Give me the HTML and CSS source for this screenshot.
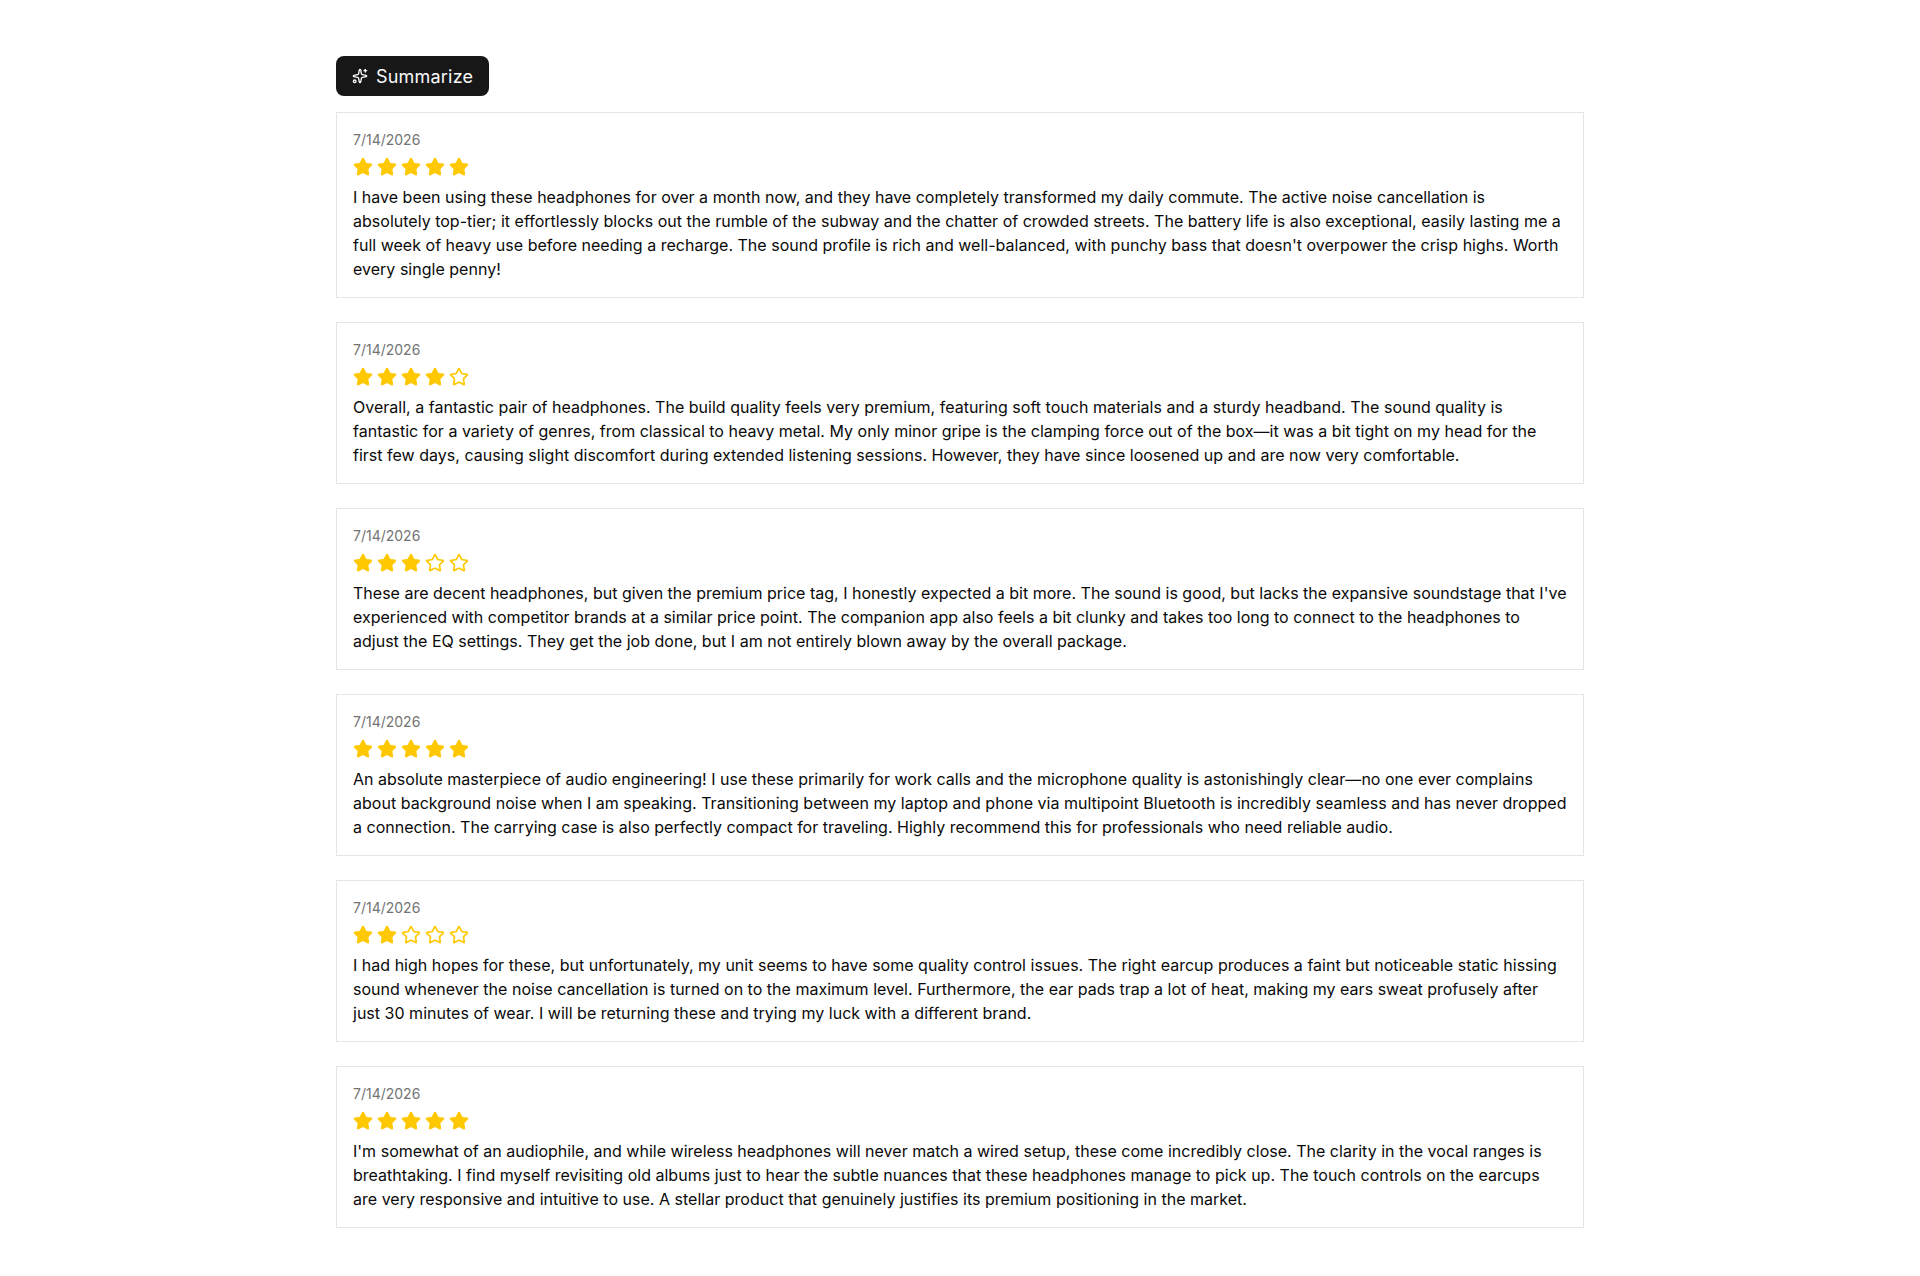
FILE: index.html
```html
<!DOCTYPE html>
<html lang="en">
<head>
<meta charset="utf-8">
<title>Reviews</title>
<link rel="stylesheet" href="styles.css">
</head>
<body>
<svg class="defs" width="0" height="0" aria-hidden="true">
  <symbol id="star" viewBox="0 0 24 24"><path d="M11.525 2.295a.53.53 0 0 1 .95 0l2.31 4.679a2.123 2.123 0 0 0 1.595 1.16l5.166.756a.53.53 0 0 1 .294.904l-3.736 3.638a2.123 2.123 0 0 0-.611 1.878l.882 5.14a.53.53 0 0 1-.771.56l-4.618-2.428a2.122 2.122 0 0 0-1.973 0L6.396 21.01a.53.53 0 0 1-.77-.56l.881-5.139a2.122 2.122 0 0 0-.611-1.879L2.16 9.795a.53.53 0 0 1 .294-.906l5.165-.755a2.122 2.122 0 0 0 1.597-1.16z"/></symbol>
</svg>
<main class="page">
  <button class="summarize" type="button">
    <svg class="spark" viewBox="0 0 24 24"><path d="M11.017 2.814a1 1 0 0 1 1.966 0l1.051 5.558a2 2 0 0 0 1.594 1.594l5.558 1.051a1 1 0 0 1 0 1.966l-5.558 1.051a2 2 0 0 0-1.594 1.594l-1.051 5.558a1 1 0 0 1-1.966 0l-1.051-5.558a2 2 0 0 0-1.594-1.594l-5.558-1.051a1 1 0 0 1 0-1.966l5.558-1.051a2 2 0 0 0 1.594-1.594z"/><path d="M20 2v4"/><path d="M22 4h-4"/><circle cx="4" cy="20" r="2"/></svg>
    <span class="label">Summarize</span>
  </button>
  <section class="reviews">
    <article class="card">
      <div class="date">7/14/2026</div>
      <div class="stars">
        <svg class="star on"><use href="#star"/></svg><svg class="star on"><use href="#star"/></svg><svg class="star on"><use href="#star"/></svg><svg class="star on"><use href="#star"/></svg><svg class="star on"><use href="#star"/></svg>
      </div>
      <p class="body">I have been using these headphones for over a month now, and they have completely transformed my daily commute. The active noise cancellation is absolutely top-tier; it effortlessly blocks out the rumble of the subway and the chatter of crowded streets. The battery life is also exceptional, easily lasting me a full week of heavy use before needing a recharge. The sound profile is rich and well-balanced, with punchy bass that doesn't overpower the crisp highs. Worth every single penny!</p>
    </article>
    <article class="card">
      <div class="date">7/14/2026</div>
      <div class="stars">
        <svg class="star on"><use href="#star"/></svg><svg class="star on"><use href="#star"/></svg><svg class="star on"><use href="#star"/></svg><svg class="star on"><use href="#star"/></svg><svg class="star"><use href="#star"/></svg>
      </div>
      <p class="body">Overall, a fantastic pair of headphones. The build quality feels very premium, featuring soft touch materials and a sturdy headband. The sound quality is fantastic for a variety of genres, from classical to heavy metal. My only minor gripe is the clamping force out of the box—it was a bit tight on my head for the first few days, causing slight discomfort during extended listening sessions. However, they have since loosened up and are now very comfortable.</p>
    </article>
    <article class="card">
      <div class="date">7/14/2026</div>
      <div class="stars">
        <svg class="star on"><use href="#star"/></svg><svg class="star on"><use href="#star"/></svg><svg class="star on"><use href="#star"/></svg><svg class="star"><use href="#star"/></svg><svg class="star"><use href="#star"/></svg>
      </div>
      <p class="body tight">These are decent headphones, but given the premium price tag, I honestly expected a bit more. The sound is good, but lacks the expansive soundstage that I've experienced with competitor brands at a similar price point. The companion app also feels a bit clunky and takes too long to connect to the headphones to adjust the EQ settings. They get the job done, but I am not entirely blown away by the overall package.</p>
    </article>
    <article class="card">
      <div class="date">7/14/2026</div>
      <div class="stars">
        <svg class="star on"><use href="#star"/></svg><svg class="star on"><use href="#star"/></svg><svg class="star on"><use href="#star"/></svg><svg class="star on"><use href="#star"/></svg><svg class="star on"><use href="#star"/></svg>
      </div>
      <p class="body">An absolute masterpiece of audio engineering! I use these primarily for work calls and the microphone quality is astonishingly clear—no one ever complains about background noise when I am speaking. Transitioning between my laptop and phone via multipoint Bluetooth is incredibly seamless and has never dropped a connection. The carrying case is also perfectly compact for traveling. Highly recommend this for professionals who need reliable audio.</p>
    </article>
    <article class="card">
      <div class="date">7/14/2026</div>
      <div class="stars">
        <svg class="star on"><use href="#star"/></svg><svg class="star on"><use href="#star"/></svg><svg class="star"><use href="#star"/></svg><svg class="star"><use href="#star"/></svg><svg class="star"><use href="#star"/></svg>
      </div>
      <p class="body">I had high hopes for these, but unfortunately, my unit seems to have some quality control issues. The right earcup produces a faint but noticeable static hissing sound whenever the noise cancellation is turned on to the maximum level. Furthermore, the ear pads trap a lot of heat, making my ears sweat profusely after just 30 minutes of wear. I will be returning these and trying my luck with a different brand.</p>
    </article>
    <article class="card">
      <div class="date">7/14/2026</div>
      <div class="stars">
        <svg class="star on"><use href="#star"/></svg><svg class="star on"><use href="#star"/></svg><svg class="star on"><use href="#star"/></svg><svg class="star on"><use href="#star"/></svg><svg class="star on"><use href="#star"/></svg>
      </div>
      <p class="body">I'm somewhat of an audiophile, and while wireless headphones will never match a wired setup, these come incredibly close. The clarity in the vocal ranges is breathtaking. I find myself revisiting old albums just to hear the subtle nuances that these headphones manage to pick up. The touch controls on the earcups are very responsive and intuitive to use. A stellar product that genuinely justifies its premium positioning in the market.</p>
    </article>
  </section>
</main>
</body>
</html>
```

FILE: styles.css
```css
* { box-sizing: border-box; }
html, body { margin: 0; background: #fff; }
body {
  font-family: Inter, "Liberation Sans", sans-serif;
  color: #0a0a0a;
  font-size: 16px;
  line-height: 24px;
}
.defs { position: absolute; }
.page {
  max-width: 1280px;
  margin: 0 auto;
  padding: 56px 16px 40px;
}
.summarize {
  display: flex;
  align-items: center;
  gap: 8px;
  height: 40px;
  padding: 0 16px;
  border: 0;
  border-radius: 8px;
  background: #171717;
  color: #fafafa;
  font: 400 18px/28px Inter, "Liberation Sans", sans-serif;
  letter-spacing: 0.2px;
}
.label { padding-top: 1px; }
.spark {
  width: 16px;
  height: 16px;
  fill: none;
  stroke: currentColor;
  stroke-width: 2;
  stroke-linecap: round;
  stroke-linejoin: round;
}
.reviews {
  display: flex;
  flex-direction: column;
  gap: 24px;
  margin-top: 16px;
}
.card {
  border: 1px solid #e5e5e5;
  padding: 16px;
}
.date {
  font-size: 14px;
  line-height: 21px;
  color: #737373;
}
.stars {
  display: flex;
  gap: 4px;
  margin: 7px 0 8px;
}
.star {
  width: 20px;
  height: 20px;
  fill: none;
  stroke: #ffc800;
  stroke-width: 2;
  stroke-linecap: round;
  stroke-linejoin: round;
}
.star.on { fill: #ffc800; }
.body {
  margin: 0;
  letter-spacing: 0.015px;
}
.body.tight { letter-spacing: 0.008px; }
```
